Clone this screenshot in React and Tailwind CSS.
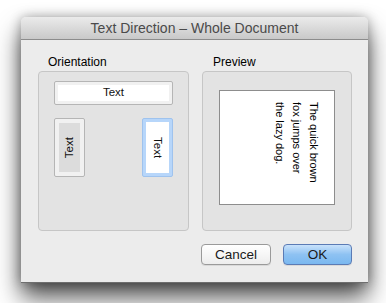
export default function App() {
  const font = { fontFamily: '"Liberation Sans", Arial, sans-serif' }
  return (
    <div className="w-[386px] h-[303px] bg-white pt-[17px] pl-[21px] overflow-hidden" style={font}>
      <div className="w-[347px] h-[266px] bg-[#ececec] rounded-t-[5px] flex flex-col shadow-[0_14px_24px_rgba(0,0,0,0.7),0_0_12px_rgba(0,0,0,0.3)] border-b border-[#6e6e6e]">
        {/* Title bar */}
        <div className="h-[23px] shrink-0 rounded-t-[5px] bg-gradient-to-b from-[#ebebeb] to-[#c9c9c9] border-b border-[#8c8c8c] flex items-center justify-center text-[14px] text-[#4a4a4a]">
          Text Direction – Whole Document
        </div>

        <div className="flex gap-[13px] pl-[17px] pr-[16px] pt-[15px]">
          {/* Orientation */}
          <div className="flex flex-col">
            <div className="text-[12px] leading-[14px] text-black pl-[10px] h-[16px]">Orientation</div>
            <div className="w-[151px] h-[160px] bg-[#e3e3e3] border border-[#c6c6c6] rounded-[4px] px-[15px] pt-[9px]">
              <div className="h-[24px] border border-[#b5b5b5] rounded-[2px] bg-[#f1f1f1] p-[3px]">
                <div className="h-full bg-white flex items-center justify-center text-[11.5px] text-[#111]">Text</div>
              </div>
              <div className="flex justify-between mt-[13px]">
                <div className="w-[31px] h-[59px] border border-[#b5b5b5] rounded-[2px] bg-[#f1f1f1] p-[4px]">
                  <div className="h-full bg-[#dcdcdc] flex items-center justify-center">
                    <span className="-rotate-90 text-[11.5px] text-[#111]">Text</span>
                  </div>
                </div>
                <div className="w-[31px] h-[59px] border border-[#9fc3ee] rounded-[2px] bg-[#b7d6fa] p-[3px]">
                  <div className="h-full bg-white flex items-center justify-center">
                    <span className="rotate-90 text-[11.5px] text-[#111]">Text</span>
                  </div>
                </div>
              </div>
            </div>
          </div>

          {/* Preview */}
          <div className="flex flex-col">
            <div className="text-[12px] leading-[14px] text-black pl-[11px] h-[16px]">Preview</div>
            <div className="w-[150px] h-[160px] bg-[#e3e3e3] border border-[#c6c6c6] rounded-[4px] pl-[16px] pt-[18px]">
              <div className="w-[116px] h-[115px] bg-white border border-[#8d8d8d] pt-[11px] pr-[12px] flex justify-end">
                <div className="[writing-mode:vertical-rl] text-[11px] leading-[17px] text-black whitespace-nowrap">
                  The quick brown<br />fox jumps over<br />the lazy dog.
                </div>
              </div>
            </div>
          </div>
        </div>

        {/* Buttons */}
        <div className="flex justify-end gap-[12px] pr-[16px] mt-[13px]">
          <button className="w-[70px] h-[21px] rounded-[4px] border border-[#9a9a9a] bg-gradient-to-b from-white to-[#ededed] text-[13.5px] text-[#1a1a1a] leading-none shadow-[0_1px_0_rgba(0,0,0,0.08)]">
            Cancel
          </button>
          <button className="w-[69px] h-[21px] rounded-[4px] border border-[#5b7bb5] bg-gradient-to-b from-[#c9e2fb] via-[#8ec2f2] to-[#7ab8f0] text-[13.5px] text-[#1a1a1a] leading-none shadow-[0_1px_0_rgba(0,0,0,0.08)]">
            OK
          </button>
        </div>
      </div>
    </div>
  )
}
